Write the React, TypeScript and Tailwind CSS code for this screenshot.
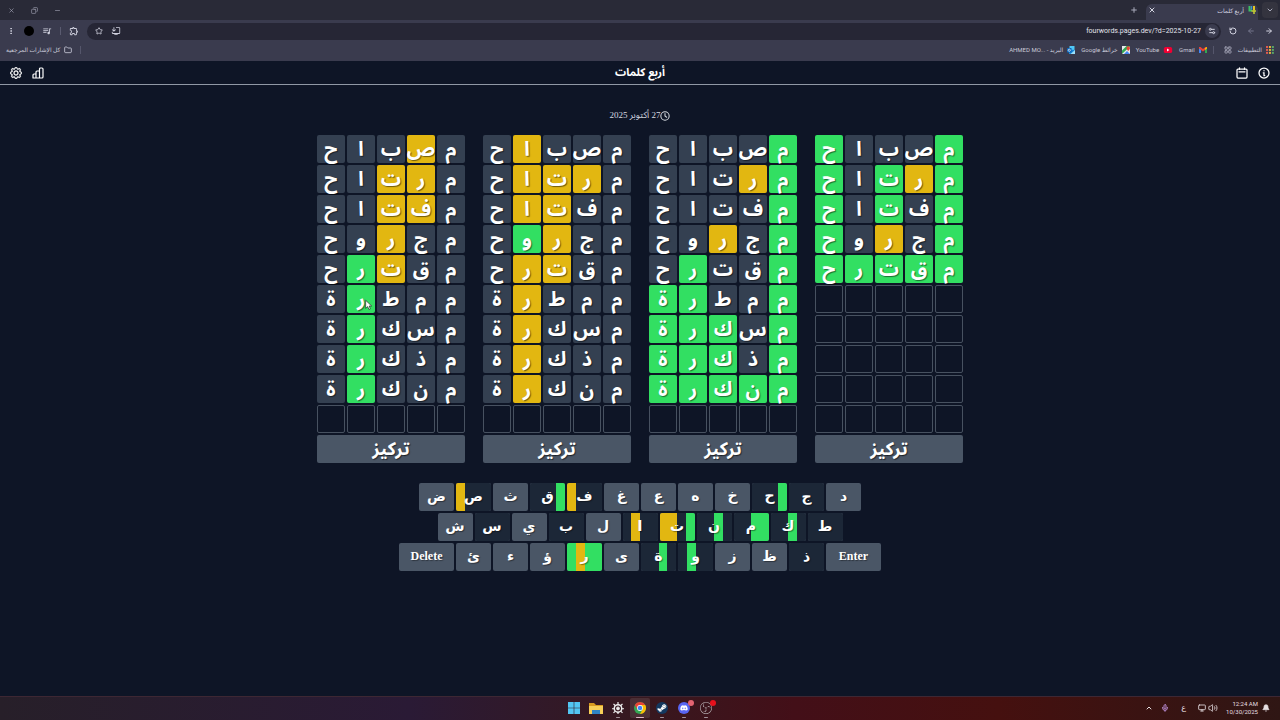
import React from "react";
import {
  ArrowLeft,
  ArrowRight,
  Bell,
  ChevronDown,
  ChevronUp,
  Copy,
  EllipsisVertical,
  Folder,
  LayoutGrid,
  Mic,
  Minus,
  Monitor,
  Plus,
  RotateCcw,
  Settings2,
  Star,
  Volume2,
  X,
} from "lucide-react";
import { BsGear } from "react-icons/bs";
import { FaDiscord, FaSteamSymbol } from "react-icons/fa";
import {
  MdOutlineExtension,
  MdOutlineInstallDesktop,
  MdQueueMusic,
} from "react-icons/md";
import { SiObsstudio } from "react-icons/si";

interface IBoard {
  id: number;
  marks: string[];
}

interface IKey {
  label: string;
  // one char per board, left to right: g, y, x (absent), omitted when unused
  state?: string;
}

const ROWS = 10;

const WORDS = [
  "مصباح",
  "مرتاح",
  "مفتاح",
  "مجروح",
  "مقترح",
  "ممطرة",
  "مسكرة",
  "مذكرة",
  "منكرة",
];

const BOARDS: IBoard[] = [
  { id: 1, marks: ["gxxxg", "gygxg", "gxgxg", "gxyxg", "ggggg"] },
  {
    id: 2,
    marks: [
      "gxxxx",
      "gyxxx",
      "gxxxx",
      "gxyxx",
      "gxxgx",
      "gxxgg",
      "gxggg",
      "gxggg",
      "ggggg",
    ],
  },
  {
    id: 3,
    marks: [
      "xxxyx",
      "xyyyx",
      "xxyyx",
      "xxygx",
      "xxyyx",
      "xxxyx",
      "xxxyx",
      "xxxyx",
      "xxxyx",
    ],
  },
  {
    id: 4,
    marks: [
      "xyxxx",
      "xyyxx",
      "xyyxx",
      "xxyxx",
      "xxygx",
      "xxxgx",
      "xxxgx",
      "xxxgx",
      "xxxgx",
    ],
  },
];

const KEY_ROWS: IKey[][] = [
  [
    { label: "د" },
    { label: "ج", state: "xxxx" },
    { label: "ح", state: "xxxg" },
    { label: "خ" },
    { label: "ه" },
    { label: "ع" },
    { label: "غ" },
    { label: "ف", state: "yxxx" },
    { label: "ق", state: "xxxg" },
    { label: "ث" },
    { label: "ص", state: "yxxx" },
    { label: "ض" },
  ],
  [
    { label: "ط", state: "xxxx" },
    { label: "ك", state: "xxgx" },
    { label: "م", state: "xxgg" },
    { label: "ن", state: "xxgx" },
    { label: "ت", state: "yyxg" },
    { label: "ا", state: "xyxx" },
    { label: "ل" },
    { label: "ب", state: "xxxx" },
    { label: "ي" },
    { label: "س", state: "xxxx" },
    { label: "ش" },
  ],
  [
    { label: "Enter" },
    { label: "ذ", state: "xxxx" },
    { label: "ظ" },
    { label: "ز" },
    { label: "و", state: "xgxx" },
    { label: "ة", state: "xxgx" },
    { label: "ى" },
    { label: "ر", state: "gygg" },
    { label: "ؤ" },
    { label: "ء" },
    { label: "ئ" },
    { label: "Delete" },
  ],
];

const TILE_COLORS: Record<string, string> = {
  g: "bg-[#32df62]",
  y: "bg-[#e2b711]",
  x: "bg-[#344051]",
};

const STRIPE_COLORS: Record<string, string> = {
  g: "bg-[#32df62]",
  y: "bg-[#e2b711]",
  x: "bg-[#1c2737]",
};

const Pointer: React.FC = () => (
  <svg
    viewBox="0 0 12 16"
    className="absolute top-3.5 left-4.5 h-3 w-2"
    aria-hidden="true"
  >
    <path
      d="M1 1v12l3-2.6 1.9 4.3 2.2-1-1.9-4.2H10z"
      fill="#fff"
      stroke="#222"
    />
  </svg>
);

const AppsIcon: React.FC = () => (
  <svg viewBox="0 0 12 12" className="size-2">
    {["#e05a50", "#e9b13c", "#5aa866"].map((color, i) => (
      <g key={color} fill={color}>
        <rect x={i * 4.4} y="0" width="3" height="3" />
        <rect x={i * 4.4} y="4.4" width="3" height="3" />
        <rect x={i * 4.4} y="8.8" width="3" height="3" />
      </g>
    ))}
  </svg>
);

const GmailIcon: React.FC = () => (
  <svg viewBox="0 0 16 12" className="h-1.5 w-2">
    <path d="M0 1.5V12h4V5z" fill="#4285f4" />
    <path d="M12 5v7h4V1.5z" fill="#34a853" />
    <path d="M0 0h3l5 4 5-4h3v3l-8 6-8-6z" fill="#ea4335" />
    <path d="M12 2l4-2v3l-4 3z" fill="#fbbc04" />
  </svg>
);

const YouTubeIcon: React.FC = () => (
  <svg viewBox="0 0 18 13" className="h-1.5 w-2.5">
    <rect width="18" height="13" rx="4" fill="#f00033" />
    <path d="M7 3.5v6l5-3z" fill="#fff" />
  </svg>
);

const MapsIcon: React.FC = () => (
  <svg viewBox="0 0 16 16" className="size-2">
    <rect width="16" height="16" rx="2" fill="#34a853" />
    <path d="M0 0h9L0 9z" fill="#e8eaed" />
    <path d="M0 16L16 1v15z" fill="#e8eaed" />
    <path d="M4 16l6-6 6 6z" fill="#4285f4" />
    <path d="M9 4a3.4 3.4 0 0 1 7 0c0 3-3.5 6-3.5 6S9 7 9 4z" fill="#ea4335" />
  </svg>
);

const OutlookIcon: React.FC = () => (
  <svg viewBox="0 0 16 16" className="size-2">
    <path d="M5 0h10v9H5z" fill="#50c8f5" />
    <path d="M4 7l12 1v8H4z" fill="#1a86d8" />
    <path d="M16 8v8H7z" fill="#9be0fb" />
    <rect y="4" width="9" height="9" rx="1" fill="#0a64b8" />
    <circle cx="4.5" cy="8.5" r="2.2" fill="none" stroke="#fff" strokeWidth="1.4" />
  </svg>
);

const FaviconIcon: React.FC = () => (
  <svg viewBox="0 0 16 16" className="size-2" fill="none" strokeWidth="4">
    <path d="M3 0v9h5" stroke="#3dbf63" />
    <path d="M7 0v7" stroke="#3d8fd0" strokeWidth="3" />
    <path d="M12 0v9" stroke="#e5c522" />
    <path d="M7 10h9M12 9v7" stroke="#c6cf35" strokeWidth="3" />
  </svg>
);

const TitleBar: React.FC = () => (
  <div className="flex h-5 items-center justify-between bg-[#292a37] text-[#a9aabb]">
    <div className="flex h-full items-center gap-1">
      <button
        aria-label="بحث في علامات التبويب"
        className="mr-0.5 flex size-4 items-center justify-center rounded bg-[#34343f]"
      >
        <ChevronDown className="size-2" strokeWidth={3} />
      </button>
      <div className="mt-1 flex h-4 w-28 items-center gap-1 rounded-t-md bg-[#3a3b4e] px-0.5 pb-1 text-[6px] text-[#d5d6e2]">
        <FaviconIcon />
        <span className="grow">أربع كلمات</span>
        <button aria-label="إغلاق">
          <X className="size-2" strokeWidth={3} />
        </button>
      </div>
      <button aria-label="علامة تبويب جديدة" className="mr-1">
        <Plus className="size-2" strokeWidth={3} />
      </button>
    </div>
    <div className="flex items-center gap-4 pl-2">
      <button aria-label="تصغير">
        <Minus className="size-[7px]" />
      </button>
      <button aria-label="استعادة">
        <Copy className="size-[7px] -scale-x-100" />
      </button>
      <button aria-label="إغلاق النافذة">
        <X className="size-[7px]" />
      </button>
    </div>
  </div>
);

const Toolbar: React.FC = () => (
  <div className="flex h-[22px] items-center gap-2 bg-[#3a3b4e] px-[7px] text-[#d0d1de]">
    <div className="flex items-center gap-2.5">
      <button aria-label="رجوع">
        <ArrowRight className="size-2" strokeWidth={3} />
      </button>
      <button aria-label="للأمام" className="text-[#73748a]">
        <ArrowLeft className="size-2" strokeWidth={3} />
      </button>
      <button aria-label="إعادة تحميل">
        <RotateCcw className="size-2" strokeWidth={3} />
      </button>
    </div>
    <div className="flex h-[17px] grow items-center gap-2 rounded-full bg-[#262635] px-2">
      <button
        aria-label="معلومات الموقع"
        className="-mr-1.5 flex size-3.5 items-center justify-center rounded-full bg-[#3a3b4e]"
      >
        <Settings2 className="size-2" strokeWidth={3} />
      </button>
      <input
        aria-label="العنوان"
        dir="ltr"
        readOnly
        value="fourwords.pages.dev/?d=2025-10-27"
        className="-mr-1 min-w-0 grow bg-transparent text-right text-[7px] text-[#e2e3ec] outline-none"
      />
      <button aria-label="تثبيت">
        <MdOutlineInstallDesktop className="size-2.5 -scale-x-100" />
      </button>
      <button aria-label="إشارة مرجعية">
        <Star className="size-2" strokeWidth={2.5} />
      </button>
    </div>
    <button aria-label="الإضافات">
      <MdOutlineExtension className="size-2.5" />
    </button>
    <span className="h-2 w-px bg-[#5a5b70]" />
    <button aria-label="الوسائط">
      <MdQueueMusic className="size-2.5" />
    </button>
    <button
      aria-label="الملف الشخصي"
      className="size-2.5 rounded-full bg-black"
    />
    <button aria-label="القائمة" className="mr-px">
      <EllipsisVertical className="size-2" strokeWidth={3} />
    </button>
  </div>
);

const Bookmarks: React.FC = () => (
  <nav className="flex h-[19px] items-center justify-between bg-[#3a3b4e] px-1.5 pb-1 text-[6px] text-[#c9cad8]">
    <div className="flex items-center gap-1.5">
      <a href="#apps" className="flex items-center gap-1">
        <AppsIcon />
        التطبيقات
      </a>
      <LayoutGrid className="size-2 text-[#9a9bad]" strokeWidth={3} />
      <span className="mr-1 h-2 w-px bg-[#55566b]" />
      <a href="#gmail" className="flex items-center gap-1">
        <GmailIcon />
        Gmail
      </a>
      <a href="#youtube" className="flex items-center gap-1">
        <YouTubeIcon />
        YouTube
      </a>
      <a href="#maps" className="flex items-center gap-1">
        <MapsIcon />
        خرائط Google
      </a>
      <a href="#mail" className="flex items-center gap-1">
        <OutlookIcon />
        <span dir="ltr">AHMED MO... - البريد</span>
      </a>
    </div>
    <div className="flex items-center gap-2">
      <span className="h-2 w-px bg-[#55566b]" />
      <a href="#all" className="flex items-center gap-1">
        <Folder className="size-2" strokeWidth={2.5} />
        كل الإشارات المرجعية
      </a>
    </div>
  </nav>
);

const Header: React.FC = () => (
  <header className="grid h-6 grid-cols-3 items-center border-b border-[#9098a5] px-2.5 text-white">
    <div className="flex items-center gap-2.5">
      <button aria-label="مساعدة">
        <svg
          viewBox="0 0 24 24"
          className="size-3"
          fill="none"
          stroke="currentColor"
          strokeWidth="2.5"
          strokeLinecap="round"
        >
          <circle cx="12" cy="12" r="10" />
          <path d="M12 7v.5M10.5 11.5H12V17h1.5" />
        </svg>
      </button>
      <button aria-label="الأرشيف">
        <svg
          viewBox="0 0 24 24"
          className="size-3"
          fill="none"
          stroke="currentColor"
          strokeWidth="2.5"
          strokeLinecap="round"
        >
          <rect x="2" y="4" width="20" height="18" rx="2" />
          <path d="M6 9.5h12M7 1.5v3M17 1.5v3" />
        </svg>
      </button>
    </div>
    <h1 className="text-center font-['Open_Sans','Noto_Sans_Arabic','Noto_Kufi_Arabic',sans-serif] text-[11px] font-bold">
      أربع كلمات
    </h1>
    <div className="flex items-center justify-end gap-2.5">
      <button aria-label="الإحصائيات">
        <svg
          viewBox="0 0 24 24"
          className="size-3"
          fill="none"
          stroke="currentColor"
          strokeWidth="2.4"
          strokeLinejoin="round"
        >
          <path d="M2 22v-6a2 2 0 0 1 2-2h4v8zM8 22V10a2 2 0 0 1 2-2h5v14zM15 22V4a2 2 0 0 1 2-2h3a2 2 0 0 1 2 2v16a2 2 0 0 1-2 2zM2 22h14" />
        </svg>
      </button>
      <button aria-label="الإعدادات">
        <BsGear className="size-3" strokeWidth={0.6} />
      </button>
    </div>
  </header>
);

const Board: React.FC<{ board: IBoard }> = ({ board }) => (
  <section className="flex w-37 flex-col gap-0.5">
    {Array.from({ length: ROWS }, (_, row) => (
      <div key={row} className="grid grid-cols-5 gap-0.5">
        {Array.from({ length: 5 }, (_, col) => {
          const mark = board.marks[row]?.[col];
          if (!mark) {
            return (
              <div
                key={col}
                className="h-7 rounded-xs border border-[#475160]"
              />
            );
          }
          return (
            <div
              key={col}
              className={`relative flex h-7 items-center justify-center rounded-xs text-xl font-bold text-white text-shadow-[1px_1px_1px_rgb(0_0_0/0.5)] ${TILE_COLORS[mark]}`}
            >
              {WORDS[row][col]}
              {board.id === 4 && row === 5 && col === 3 && <Pointer />}
            </div>
          );
        })}
      </div>
    ))}
    <button className="flex h-7 items-center justify-center rounded-xs bg-[#4a5666] pb-0.5 text-lg font-bold text-white text-shadow-[1px_1px_1px_rgb(0_0_0/0.5)]">
      تركيز
    </button>
  </section>
);

const Key: React.FC<{ item: IKey }> = ({ item }) => {
  const wide = item.label.length > 1;

  return (
    <button
      className={`relative h-7 overflow-hidden rounded-xs bg-[#4a5666] pb-0.5 font-bold text-white ${
        wide ? "w-[55px] font-['Liberation_Serif',serif] text-xs" : "w-[35px] text-sm"
      }`}
    >
      {item.state && (
        <span dir="ltr" className="absolute inset-0 grid grid-cols-4">
          {item.state.split("").map((mark, i) => (
            <span key={i} className={STRIPE_COLORS[mark]} />
          ))}
        </span>
      )}
      <span className="relative text-shadow-[1px_1px_1px_rgb(0_0_0/0.4)]">
        {item.label}
      </span>
    </button>
  );
};

const Game: React.FC = () => (
  <main className="flex grow flex-col items-center pt-[23px] font-['Open_Sans','Noto_Sans_Arabic','Noto_Kufi_Arabic',sans-serif]">
    <p className="flex h-4 items-center text-[9px] text-[#d5d9e0]">
      <svg
        viewBox="0 0 24 24"
        className="size-2.5"
        fill="none"
        stroke="currentColor"
        strokeWidth="2.5"
        strokeLinecap="round"
      >
        <circle cx="12" cy="12" r="10" />
        <path d="M12 6v6l4 3" />
      </svg>
      <span className="font-['Liberation_Serif','Open_Sans','Noto_Sans_Arabic',sans-serif]">
        27 أكتوبر 2025
      </span>
    </p>
    <div className="mt-[11px] flex gap-4.5">
      {BOARDS.map((board) => (
        <Board key={board.id} board={board} />
      ))}
    </div>
    <div className="mt-5 flex flex-col items-center gap-0.5 font-['DejaVu_Sans',sans-serif]">
      {KEY_ROWS.map((keys, i) => (
        <div key={i} className="flex gap-0.5">
          {keys.map((item) => (
            <Key key={item.label} item={item} />
          ))}
        </div>
      ))}
    </div>
  </main>
);

const TaskButton: React.FC<{
  label: string;
  running?: boolean;
  active?: boolean;
  children: React.ReactNode;
}> = ({ label, running, active, children }) => (
  <button
    aria-label={label}
    className={`relative flex h-5 w-5 items-center justify-center rounded-xs ${
      active ? "bg-white/10" : ""
    }`}
  >
    {children}
    {running && (
      <span
        className={`absolute bottom-0 h-px rounded-full ${
          active ? "w-2 bg-[#e0b8c8]" : "w-1 bg-[#a09098]"
        }`}
      />
    )}
  </button>
);

const Taskbar: React.FC = () => (
  <footer
    dir="ltr"
    className="grid h-6 grid-cols-[1fr_auto_1fr] items-center border-t border-[#3d2733] bg-[linear-gradient(90deg,#271f29,#2a1a35_32%,#37181f_50%,#430f18_62%,#45100f_78%,#2f1614)] pb-px text-[#e6dfe2]"
  >
    <span />
    <div className="flex items-center gap-0.5">
      <TaskButton label="Start">
        <svg viewBox="0 0 12 12" className="size-3" fill="#52c5f2">
          <path d="M0 0h5.7v5.7H0zM6.3 0H12v5.7H6.3zM0 6.3h5.7V12H0zM6.3 6.3H12V12H6.3z" />
        </svg>
      </TaskButton>
      <TaskButton label="File Explorer">
        <svg viewBox="0 0 14 12" className="h-3 w-3.5">
          <path d="M0 1h5l2 2h7v8H0z" fill="#d79a20" />
          <path d="M0 4h14v8H0z" fill="#f7cf58" />
          <path d="M3 8h8v4H3z" fill="#2f83c4" />
        </svg>
      </TaskButton>
      <TaskButton label="SteelSeries" running>
        <svg viewBox="0 0 16 16" className="size-3" fill="none" stroke="#f0f0f0">
          <circle cx="8" cy="8.5" r="5" strokeWidth="2" />
          <path
            d="M8 0v4M8 13v3M0 9h3M13 9h3M2 2.5l2.5 2.5M14 2.5l-2.5 2.5M4 12.5l-2 2M12 12.5l2 2"
            strokeWidth="1.6"
          />
          <circle cx="8" cy="8.5" r="2" fill="#f0f0f0" />
        </svg>
      </TaskButton>
      <TaskButton label="Google Chrome" running active>
        <svg viewBox="0 0 24 24" className="size-3">
          <circle cx="12" cy="12" r="12" fill="#34a853" />
          <path d="M1.6 6A12 12 0 0 1 22.4 6H12l-5.2 9z" fill="#ea4335" />
          <path d="M22.4 6A12 12 0 0 1 12 24l5.2-9L12 6z" fill="#fbbc04" />
          <circle cx="12" cy="12" r="5.8" fill="#fff" />
          <circle cx="12" cy="12" r="4.5" fill="#4285f4" />
        </svg>
      </TaskButton>
      <TaskButton label="Steam" running>
        <span className="flex size-3 items-center justify-center rounded-full bg-[#14385f]">
          <FaSteamSymbol className="size-2.5 text-white" />
        </span>
      </TaskButton>
      <TaskButton label="Discord" running>
        <span className="flex size-3 items-center justify-center rounded-full bg-[#5865f2]">
          <FaDiscord className="size-2 text-white" />
        </span>
        <span className="absolute top-0.5 right-0 size-1.5 rounded-full bg-[#e56472]" />
      </TaskButton>
      <TaskButton label="OBS Studio" running>
        <SiObsstudio className="size-3 text-[#c5c0c4]" />
        <span className="absolute top-0.5 right-0 size-1.5 rounded-full bg-[#e8101c]" />
      </TaskButton>
    </div>
    <div className="flex items-center justify-end gap-2 pr-2.5 text-[6px]">
      <ChevronUp className="size-2" strokeWidth={3} />
      <Mic className="size-2 text-[#b78ad0]" strokeWidth={3} />
      <span className="px-1 text-[8px]">ع</span>
      <div className="flex items-center gap-0.5">
        <Monitor className="size-2" strokeWidth={2.5} />
        <Volume2 className="size-2.5" />
      </div>
      <div className="text-right leading-2">
        <div>12:24 AM</div>
        <div>10/30/2025</div>
      </div>
      <Bell className="-ml-1 size-2" fill="currentColor" />
    </div>
  </footer>
);

const App: React.FC = () => {
  return (
    <div
      dir="rtl"
      className="flex min-h-screen flex-col bg-[#0e1526] font-[Roboto,'DejaVu_Sans',sans-serif]"
    >
      <TitleBar />
      <Toolbar />
      <Bookmarks />
      <Header />
      <Game />
      <Taskbar />
    </div>
  );
};

export default App;
